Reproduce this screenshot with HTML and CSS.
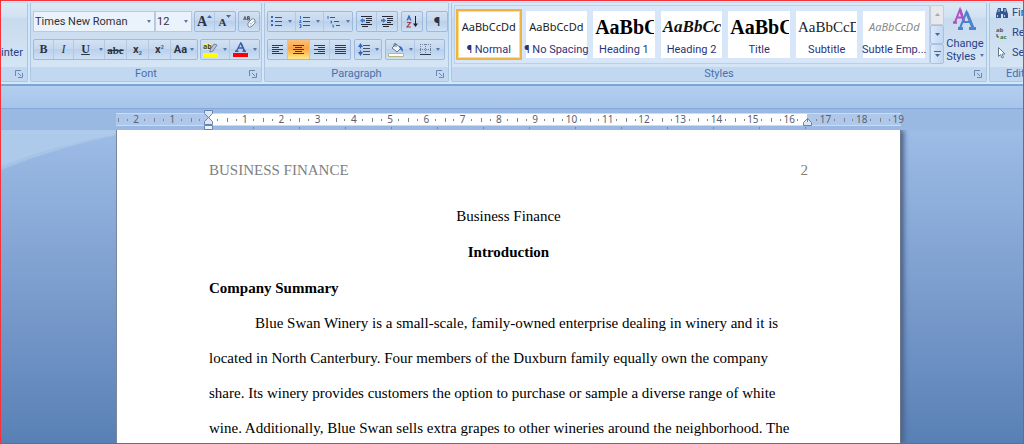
FILE: index.html
```html
<!DOCTYPE html>
<html lang="en">
<head>
<meta charset="utf-8">
<title>Business Finance</title>
<link rel="stylesheet" href="styles.css">
</head>
<body>
<div class="window">
  <header class="ribbon">
    <section class="group group-clipboard">
      <div class="group-body"><button class="painter">inter</button></div>
      <div class="group-title"><button class="launcher" aria-label="Clipboard options"><svg width="8" height="8" viewBox="0 0 8 8"><path d="M.5 6V.5H6M3 3l3 3M7.500 3v4.500H3" /></svg></button></div>
    </section>

    <section class="group group-font">
      <div class="group-body rows">
        <div class="row">
          <div class="combos">
            <label class="combo combo-name"><select aria-label="Font"><option>Times New Roman</option></select></label>
            <label class="combo combo-size"><select aria-label="Font size"><option>12</option></select></label>
          </div>
          <div class="set">
            <button class="b20 letter" aria-label="Grow font"><span class="grow">A</span><svg width="5" height="3" viewBox="0 0 5 3"><path class="fill-blue" d="M0 3L2.500 0 5 3z"/></svg></button>
            <button class="b20 letter" aria-label="Shrink font"><span class="shrink">A</span><svg width="5" height="3" viewBox="0 0 5 3"><path class="fill-blue" d="M0 0L2.500 3 5 0z"/></svg></button>
          </div>
          <div class="set"><button class="b20" aria-label="Clear formatting"><svg width="14" height="14" viewBox="0 0 14 14"><rect x="1" y="1" width="8" height="5" fill="#c9d3e4"/><path d="M1.500 5L3 1.500 4.300 5M2 4h2M5.500 1.500v3.500h2V3.300h-2 1.700V1.500z" fill="none" stroke="#48536a" stroke-width=".9"/><path d="M6 8l4-4q2-1 3 1v3l-4 4q-2 1-3-1z" fill="#fff" stroke="#75839c"/><path d="M6 8q2-1 3 1v3M9 9l4-4" fill="none" stroke="#9ba7bc" stroke-width=".7"/></svg></button></div>
        </div>
        <div class="row">
          <div class="set">
            <button class="b20 serif bold">B</button>
            <button class="b20 serif italic">I</button>
            <button class="b31 serif bold under"><span>U</span><i class="caret"></i></button>
            <button class="b22 serif strike">abc</button>
            <button class="b22 sub">x<sub>2</sub></button>
            <button class="b22 sub">x<sup>2</sup></button>
            <button class="b25 case">Aa<i class="caret"></i></button>
          </div>
          <div class="set">
            <button class="b29" aria-label="Highlight"><svg width="15" height="15" viewBox="0 0 15 15"><path fill="#f4f06a" d="M0 1h8v7H0z"/><text x="0" y="7" class="ab-text">ab</text><path d="M7 8l4-6 3 1-4 6-3 1z" fill="#b9c5d8" stroke="#566887" stroke-width=".7"/><path fill="#ff0" d="M0 11h15v4H0z"/></svg><i class="caret"></i></button>
            <button class="b29" aria-label="Font color"><svg width="15" height="15" viewBox="0 0 15 15"><path d="M3.500 9L7.700 1 11.500 9M5 6h5.500" fill="none" stroke="#3c5ea8" stroke-width="1.300"/><path d="M8 1l3.500 8M2 9.300h3.500M9.500 9.300H13" fill="none" stroke="#3c5ea8" stroke-width="1.600"/><path fill="#f00" d="M0 11h15v4H0z"/></svg><i class="caret"></i></button>
          </div>
        </div>
      </div>
      <div class="group-title"><span>Font</span><button class="launcher" aria-label="Font options"><svg width="8" height="8" viewBox="0 0 8 8"><path d="M.5 6V.5H6M3 3l3 3M7.500 3v4.500H3" /></svg></button></div>
    </section>

    <section class="group group-paragraph">
      <div class="group-body rows">
        <div class="row">
          <div class="set">
            <button class="b28" aria-label="Bullets"><svg width="12" height="12" viewBox="0 0 12 12"><path d="M4 1.500h7M4 5.500h7M4 9.500h7" stroke="#48536a"/><path fill="#3666b8" d="M0 0h2v2H0zM0 4h2v2H0zM0 8h2v2H0z"/></svg><i class="caret"></i></button>
            <button class="b28" aria-label="Numbering"><svg width="12" height="12" viewBox="0 0 12 12"><path d="M4 1.500h7M4 5.500h7M4 9.500h7" stroke="#48536a"/><path d="M1.500 0v3M.5 4.500h1.500L.5 6.500h2M.5 8.500h1.500v3H.5M1 10h1" fill="none" stroke="#3666b8" stroke-width=".9"/></svg><i class="caret"></i></button>
            <button class="b28" aria-label="Multilevel list"><svg width="14" height="12" viewBox="0 0 14 12"><path d="M3 1.500h5M7 5.500h5M9 9.500h4" stroke="#48536a"/><path d="M1 0v3M3.500 5h1v2h-1M6 8.500v2.500h1" fill="none" stroke="#3666b8"/></svg><i class="caret"></i></button>
          </div>
          <div class="set">
            <button class="b20" aria-label="Decrease indent"><svg width="13" height="11" viewBox="0 0 13 11"><path d="M1 .5h11M6 2.500h6M6 4.500h6M6 6.500h4M1 8.500h11M2 10.500h6" stroke="#252b38"/><path d="M0 4.500L3 2v1.500h2v2H3V7z" fill="#3678d0"/></svg></button>
            <button class="b20" aria-label="Increase indent"><svg width="13" height="11" viewBox="0 0 13 11"><path d="M1 .5h11M6 2.500h6M6 4.500h6M6 6.500h4M1 8.500h11M2 10.500h6" stroke="#252b38"/><path d="M5 4.500L2 2v1.500H0v2h2V7z" fill="#3678d0"/></svg></button>
          </div>
          <div class="set"><button class="b20" aria-label="Sort"><svg width="13" height="13" viewBox="0 0 13 13"><path d="M1 5.500L3 .8l2 4.700M1.800 4h2.400" fill="none" stroke="#3666b8" stroke-width="1.100"/><path d="M1 7.500h3.500L1 12h4" fill="none" stroke="#a33c4c" stroke-width="1.200"/><path d="M9.500 1v9" stroke="#222"/><path d="M7 8.500h5L9.500 12z" fill="#222"/></svg></button></div>
          <div class="set"><button class="b20 pilcrow" aria-label="Show marks">¶</button></div>
        </div>
        <div class="row">
          <div class="set">
            <button class="b20" aria-label="Align left"><svg width="11" height="10" viewBox="0 0 11 10"><path class="lines" d="M0 .5h11M0 2.500h7M0 4.500h11M0 6.500h7M0 8.500h11"/></svg></button>
            <button class="b22 active" aria-label="Center"><svg width="11" height="10" viewBox="0 0 11 10"><path class="lines" d="M0 .5h11M2 2.500h7M0 4.500h11M2 6.500h7M0 8.500h11"/></svg></button>
            <button class="b20" aria-label="Align right"><svg width="11" height="10" viewBox="0 0 11 10"><path class="lines" d="M0 .5h11M4 2.500h7M0 4.500h11M4 6.500h7M0 8.500h11"/></svg></button>
            <button class="b20" aria-label="Justify"><svg width="11" height="10" viewBox="0 0 11 10"><path class="lines" d="M0 .5h11M0 2.500h11M0 4.500h11M0 6.500h11M0 8.500h11"/></svg></button>
          </div>
          <div class="set"><button class="b25" aria-label="Line spacing"><svg width="12" height="13" viewBox="0 0 12 13"><path d="M5 2.500h7M5 5.500h7M5 8.500h7M5 11.500h7" stroke="#48536a"/><path d="M0 4L2.500 0 5 4H3.200v1.500H1.800V4zM0 9l2.500 4L5 9H3.200V7.500H1.800V9z" fill="#3666b8"/></svg><i class="caret"></i></button></div>
          <div class="set">
            <button class="b29" aria-label="Shading"><svg width="16" height="14" viewBox="0 0 16 14"><path d="M4 5l4-4 5 4-4 4z" fill="#eef3fa" stroke="#66758e"/><path d="M6 4V1q1-1 2 0v3" fill="none" stroke="#66758e"/><path d="M11 3q4 0 4 6l-3-3z" fill="#3666b8"/><path d="M.5 10.500h15v3H.5z" fill="#fff" stroke="#b9b878"/></svg><i class="caret"></i></button>
            <button class="b29" aria-label="Borders"><svg width="11" height="11" viewBox="0 0 11 11"><path d="M0 .5h11M0 5.500h11M.5 0v10M5.500 0v10M10.500 0v10" stroke="#72809a" stroke-dasharray="1 1"/><path d="M0 10.500h11" stroke="#30384a"/></svg><i class="caret"></i></button>
          </div>
        </div>
      </div>
      <div class="group-title"><span>Paragraph</span><button class="launcher" aria-label="Paragraph options"><svg width="8" height="8" viewBox="0 0 8 8"><path d="M.5 6V.5H6M3 3l3 3M7.500 3v4.500H3" /></svg></button></div>
    </section>

    <section class="group group-styles">
      <div class="group-body styles-body">
        <div class="gallery">
          <button class="style selected"><span class="sample">AaBbCcDd</span><span class="name">¶ Normal</span></button>
          <button class="style"><span class="sample">AaBbCcDd</span><span class="name">¶ No Spacing</span></button>
          <button class="style"><span class="sample heading-one">AaBbC</span><span class="name">Heading 1</span></button>
          <button class="style"><span class="sample heading-two">AaBbCc</span><span class="name">Heading 2</span></button>
          <button class="style"><span class="sample heading-one">AaBbC</span><span class="name">Title</span></button>
          <button class="style"><span class="sample subtitle">AaBbCcD</span><span class="name">Subtitle</span></button>
          <button class="style"><span class="sample subtle">AaBbCcDd</span><span class="name">Subtle Emp...</span></button>
        </div>
        <div class="scroller">
          <button class="off" aria-label="Up"><svg width="5" height="3" viewBox="0 0 5 3"><path d="M0 3L2.500 0 5 3z" fill="#a3a9b3"/></svg></button>
          <button aria-label="Down"><svg width="5" height="3" viewBox="0 0 5 3"><path class="fill-blue" d="M0 0L2.500 3 5 0z"/></svg></button>
          <button aria-label="More styles"><svg width="7" height="6" viewBox="0 0 7 6"><path class="fill-blue" d="M0 0h7v1H0zM1 3l2.500 3L6 3z"/></svg></button>
        </div>
        <button class="change"><svg width="24" height="23" viewBox="0 0 24 23"><path d="M2 15L7 2.500 11 15M3.500 10.500h6" fill="none" stroke="#b04fc0" stroke-width="2"/><path d="M7 2l4 13M0 15.500h4" fill="none" stroke="#b04fc0" stroke-width="2.500"/><path d="M7 21l6.500-16L20 21M9 15h9" fill="none" stroke="#4c83cf" stroke-width="2"/><path d="M13.500 5L20 21M5 21.500h5M16 21.500h7" fill="none" stroke="#4c83cf" stroke-width="3"/></svg><span>Change</span><span>Styles<i class="caret"></i></span></button>
      </div>
      <div class="group-title"><span>Styles</span><button class="launcher" aria-label="Style options"><svg width="8" height="8" viewBox="0 0 8 8"><path d="M.5 6V.5H6M3 3l3 3M7.500 3v4.500H3" /></svg></button></div>
    </section>

    <section class="group group-editing">
      <div class="group-body edit-list">
        <button><svg width="12" height="12" viewBox="0 0 12 12"><path d="M2 1h3v3h2V1h3l2 6v4H7V7H5v4H0V7z" fill="#35578f"/><path d="M1.500 8v2M8.500 8v2M3 2v3M9 2v3" stroke="#b9cdec"/></svg>Find</button>
        <button><svg width="12" height="12" viewBox="0 0 12 12"><text x="0" y="5" class="ab-small">ab</text><text x="4" y="12" class="ac-small">ac</text><path d="M1 7v3h2" fill="none" stroke="#444"/></svg>Replace</button>
        <button><svg width="12" height="12" viewBox="0 0 12 12"><path d="M2.500.5v9l2-2 1.500 3.500 1.500-.7L6 7h3z" fill="#fff" stroke="#68788f"/></svg>Select</button>
      </div>
      <div class="group-title"><span>Editing</span></div>
    </section>
  </header>

  <div class="quickbar"></div>

  <main class="workspace">
    <svg class="swoosh" width="116" height="40" viewBox="0 0 116 40"><path d="M0 0h116v5Q54 18 0 40z" fill="#b3ceed" opacity=".5"/><path d="M0 0h116v4Q54 15 0 36z" fill="#b3ceed" opacity=".6"/></svg>
    <div class="ruler-zone">
      <div class="ruler">
        <span>2</span><span>1</span><span class="zero"><svg class="indent" width="9" height="20" viewBox="0 0 9 20"><path d="M.5.5h8v3l-4 4-4-4zM.5 14.500v-3l4-4 4 4v3z" fill="#dce6f4" stroke="#6685b2"/><path d="M.5 15.500h8v4h-8z" fill="#eef3fa" stroke="#6685b2"/></svg></span><span>1</span><span>2</span><span>3</span><span>4</span><span>5</span><span>6</span><span>7</span><span>8</span><span>9</span><span>10</span><span>11</span><span>12</span><span>13</span><span>14</span><span>15</span><span class="last-margin">16<svg class="right-indent" width="9" height="8" viewBox="0 0 9 8"><path d="M.5 7.500v-3l4-4 4 4v3z" fill="#dce6f4" stroke="#6685b2"/></svg></span><span>17</span><span>18</span><span class="end">19</span>
      </div>
      <div class="tabs"></div>
    </div>
    <article class="page">
      <div class="page-header"><span>BUSINESS FINANCE</span><span>2</span></div>
      <h1>Business Finance</h1>
      <h2>Introduction</h2>
      <h3>Company Summary</h3>
      <p>Blue Swan Winery is a small-scale, family-owned enterprise dealing in winery and it is<br>located in North Canterbury. Four members of the Duxburn family equally own the company<br>share. Its winery provides customers the option to purchase or sample a diverse range of white<br>wine. Additionally, Blue Swan sells extra grapes to other wineries around the neighborhood. The</p>
    </article>
  </main>
</div>
</body>
</html>
```
FILE: styles.css
```css
* { box-sizing: border-box; }

body {
  margin: 0;
  font-family: Roboto, "Noto Sans", sans-serif;
  font-size: 11px;
  color: #1e395b;
}

.window {
  height: 100vh;
  border: 1px solid #f5333a;
  display: flex;
  flex-direction: column;
  overflow: hidden;
  background: #9ab9e2;
}

button, select {
  font: inherit;
  color: inherit;
  border: 0;
  padding: 0;
  background: none;
}

svg { display: block; flex: none; }

/* Ribbon */
.ribbon {
  flex: none;
  display: flex;
  gap: 2px;
  height: 83px;
  padding: 1px 0;
  background: #d5e6f7;
  border-bottom: 1px solid #c8f0f8;
  overflow: hidden;
}

.group {
  flex: none;
  display: flex;
  flex-direction: column;
  border: 1px solid #a9c6e2;
  border-top-color: #c6d8ec;
  border-radius: 2px;
  background: linear-gradient(#dce8f5, #d2e1f2 18%, #c8daee 20%, #d8e8f6);
}

.group-clipboard { width: 27px; border-left: 0; }
.group-font { width: 232px; }
.group-paragraph { width: 185px; }
.group-styles { flex: 1; min-width: 480px; }
.group-editing { width: 34px; overflow: hidden; border-right: 0; }

.group-body { flex: 1; min-height: 0; }

.group-title {
  display: flex;
  align-items: center;
  justify-content: center;
  position: relative;
  height: 14px;
  line-height: 14px;
  background: #c1d8f0;
  color: #4870ab;
}

.launcher { position: absolute; right: 4px; top: 3px; }
.launcher path { fill: none; stroke: #6c87ad; }

.painter { padding-top: 42px; line-height: 16px; color: #24428c; }

.rows { padding: 8px 2px 0; display: flex; flex-direction: column; gap: 7px; }
.row { display: flex; gap: 3px; height: 21px; }
.group-font .row { justify-content: space-between; gap: 2px; }

.set {
  display: flex;
  border: 1px solid #9dbadd;
  border-radius: 2px;
  background: linear-gradient(#d3e1f3, #c5d8ef 45%, #b9d0eb 50%, #cfe0f4);
}

.set button {
  display: flex;
  align-items: center;
  justify-content: center;
  gap: 5px;
  border-right: 1px solid #b2c8e3;
  color: #2c3442;
}
.set button:last-child { border-right: 0; }

.b20 { width: 20px; }
.b22 { width: 22px; }
.b25 { width: 26px; }
.b28 { width: 28px; }
.b29 { width: 29px; }
.b31 { width: 31px; }

.set .active { background: linear-gradient(#fbc07c, #fba544 45%, #fecb61 75%, #fee993); }

.caret {
  display: inline-block;
  flex: none;
  border: 2px solid transparent;
  border-top: 3px solid #5779ad;
  border-bottom: 0;
}

.combos { display: flex; }
.combo {
  position: relative;
  border: 1px solid #b4cae5;
  background: #eaf2fb;
}
.combo::after {
  content: "";
  position: absolute;
  right: 3px;
  top: 8px;
  border: 2px solid transparent;
  border-top: 3px solid #5779ad;
  border-bottom: 0;
}
.combo select { appearance: none; width: 100%; height: 19px; padding-left: 1px; color: #333; }
.combo-name { width: 122px; }
.combo-size { width: 37px; }

.set .letter { gap: 0; align-items: flex-start; padding-top: 3px; font-family: "Liberation Serif", serif; font-weight: bold; }
.grow { font-size: 14px; line-height: 14px; }
.shrink { font-size: 11px; line-height: 15px; }
.fill-blue { fill: #4068a8; }

.serif { font-family: "Liberation Serif", serif; font-size: 12px; }
.bold { font-weight: bold; }
.italic { font-style: italic; }
.under span { text-decoration: underline; }
.under { padding-left: 6px; }
.set .under { gap: 9px; }
.strike { text-decoration: line-through; font-weight: bold; font-size: 11px; }
.set .sub { gap: 0; font-weight: bold; }
.sub sub, .sub sup { font-size: 6px; color: #3666b8; line-height: 8px; }
.sub sub { align-self: flex-end; padding-bottom: 2px; }
.sub sup { align-self: flex-start; padding-top: 3px; }
.set .case { gap: 3px; font-weight: bold; }
.ab-text { font: bold 7px "Open Sans", sans-serif; fill: #444; }
.ab-small { font: bold 6px "Open Sans", sans-serif; fill: #555; }
.ac-small { font: bold 6px "Open Sans", sans-serif; fill: #2d7b43; }
.pilcrow { font-size: 13px; font-weight: bold; }
.lines { stroke: #323a49; }

/* Style gallery */
.styles-body { display: flex; padding: 2px 0 3px 2px; }

.gallery {
  flex: 1;
  min-width: 0;
  display: flex;
  gap: 6px;
  padding: 5px 4px 5px 3px;
  border: 1px solid #b9d0ec;
  background: #d7e7f9;
}

.style {
  flex: 1;
  min-width: 0;
  height: 47px;
  padding: 0 1px;
  background: #fff;
  display: flex;
  flex-direction: column;
  justify-content: flex-start;
  align-items: stretch;
}
.style.selected {
  outline: 2px solid #efb341;
  box-shadow: inset 0 0 0 1px #fddf82;
}
.sample {
  height: 31px;
  line-height: 32px;
  font-family: "Noto Sans", sans-serif;
  font-size: 11px;
  color: #222;
  overflow: hidden;
  white-space: nowrap;
  text-align: center;
}
.name { line-height: 15px; color: #29327d; white-space: nowrap; text-align: center; align-self: center; }
.heading-one, .heading-two, .subtitle { font-family: "Liberation Serif", serif; text-align: left; padding-left: 1px; }
.heading-one { font-weight: bold; font-size: 20px; color: #000; }
.heading-two { font-weight: bold; font-style: italic; font-size: 17px; color: #111; }
.subtitle { font-size: 15px; }
.subtle { font-style: italic; color: #888; }

.scroller { width: 14px; display: flex; flex-direction: column; }
.scroller button {
  flex: 1;
  display: flex;
  align-items: center;
  justify-content: center;
  border: 1px solid #a8c2e3;
  border-radius: 2px;
  background: linear-gradient(90deg, #dbe8f8, #c3d7f0);
}
.scroller .off { background: #e6e9ed; border-color: #c5cdd7; }

.change {
  width: 42px;
  display: flex;
  flex-direction: column;
  align-items: center;
  padding-top: 2px;
  line-height: 13px;
  color: #24428c;
}
.change svg { margin-bottom: 7px; }
.change .caret { margin: 0 0 3px 4px; }

.edit-list { display: flex; flex-direction: column; padding: 0 0 0 6px; }
.edit-list button { display: flex; align-items: center; gap: 4px; height: 20px; line-height: 14px; color: #24428c; }
.group-editing .group-title { justify-content: flex-start; padding-left: 16px; }

.quickbar {
  flex: none;
  height: 25px;
  border-top: 2px solid #7fa3d2;
  border-bottom: 1px solid #86a8d6;
  background: linear-gradient(#b3cfef, #a7c4ea);
}

/* Document area */
.workspace {
  flex: 1;
  min-height: 0;
  position: relative;
  display: grid;
  grid-template-columns: 115fr 785fr 122fr;
  grid-template-rows: 21px 1fr;
  background: linear-gradient(#9ab9e2 21px, #9dbce6 22px, #7b9dcd 55%, #5980b5);
}

.swoosh { position: absolute; left: 0; top: 21px; }

.ruler-zone { grid-column: 2; padding-top: 4px; position: relative; z-index: 1; }

.ruler {
  display: grid;
  grid-template-columns: repeat(21, 2fr) 1fr;
  height: 13px;
  padding: 0 3px 0 2px;
  font-family: "Noto Sans", sans-serif;
  font-size: 10px;
  line-height: 11px;
  color: #5c5f70;
  border: solid #c9dcf3;
  border-width: 1px 0;
  background: linear-gradient(90deg, #afc8ea 12%, #fff 12%, #fff 88%, #afc8ea 88%);
}

.ruler span {
  position: relative;
  text-align: center;
  background:
    linear-gradient(#7c8393, #7c8393) 0 4px / 1px 4px no-repeat,
    linear-gradient(#7c8393, #7c8393) 25% 5px / 1px 2px no-repeat,
    linear-gradient(#7c8393, #7c8393) 75% 5px / 1px 2px no-repeat;
}
.ruler .end {
  margin-right: -6px;
  text-align: right;
  background-size: 1px 4px, 1px 2px, 0 0;
  background-position: 0 4px, 9px 5px, 0 0;
}
.indent { position: absolute; left: calc(50% - 5px); top: -4px; }
.right-indent { position: absolute; right: -5px; top: 4px; }

.tabs {
  height: 4px;
  margin-left: 92px;
  margin-right: 92px;
  background: repeating-linear-gradient(90deg, transparent 0 45px, #7189ad 45px 46px) 0 1px / 100% 2px no-repeat;
}

.page {
  grid-column: 2;
  padding: 27px 92px 0;
  background: #fff;
  border-left: 1px solid #78859a;
  border-right: 1px solid #6e7889;
  box-shadow: 3px 0 5px #48628c;
  clip-path: inset(0 -10px 0 0);
  overflow: hidden;
  white-space: nowrap;
  font-family: "Liberation Serif", "Times New Roman", serif;
  font-size: 15px;
  color: #000;
}

.page-header { display: flex; justify-content: space-between; height: 41px; line-height: 26px; color: #808080; }
h1, h2, h3, p { margin: 0; font-size: 15px; }
h1, h2, h3 { line-height: 36px; }
h1 { font-weight: normal; }
h1, h2 { text-align: center; }
p { line-height: 35px; text-indent: 46px; }
```
